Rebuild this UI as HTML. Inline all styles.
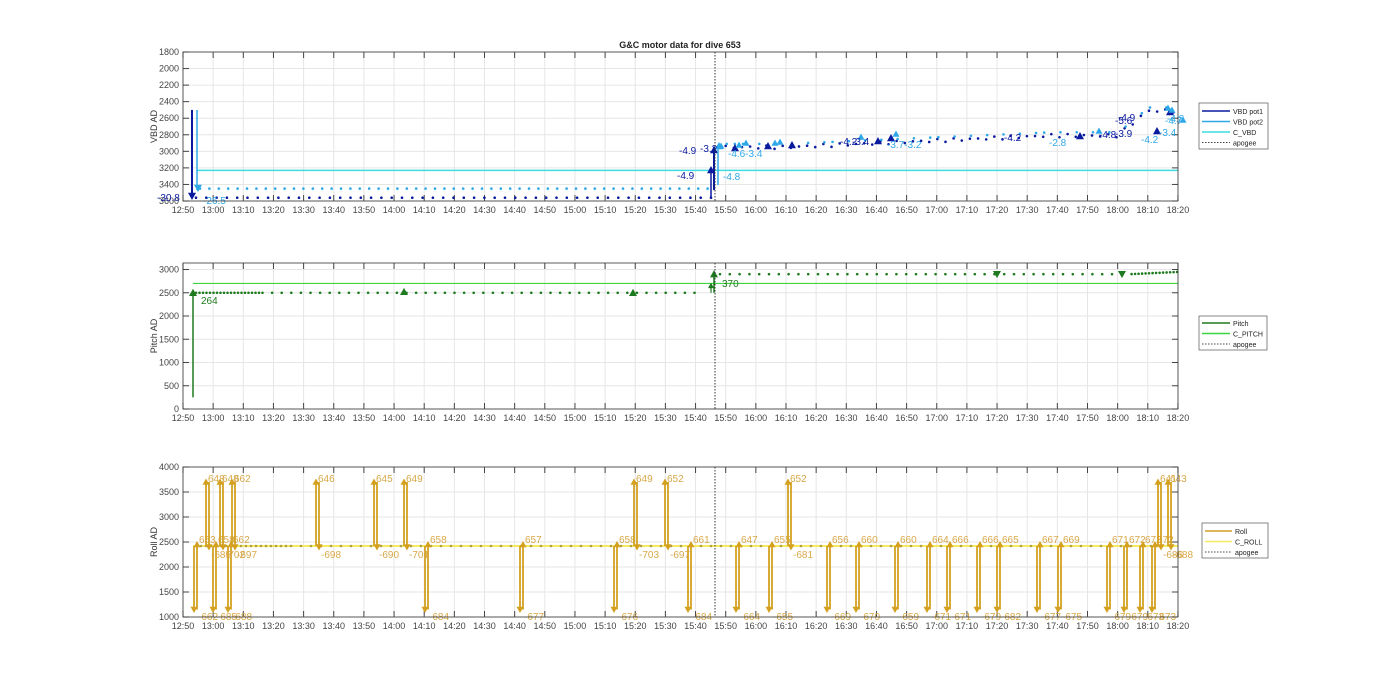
<!DOCTYPE html>
<html><head><meta charset="utf-8"><style>
html,body{margin:0;padding:0;background:#fff;}
svg{display:block;font-family:"Liberation Sans",sans-serif;}
</style></head><body>
<svg id="s" width="1400" height="693" xmlns="http://www.w3.org/2000/svg"></svg>
<script>
const S=document.getElementById('s');let h='';
const L=183,R=1178;
const X=t=>L+t*3.015;
const ticks=['12:50','13:00','13:10','13:20','13:30','13:40','13:50','14:00','14:10','14:20','14:30','14:40','14:50','15:00','15:10','15:20','15:30','15:40','15:50','16:00','16:10','16:20','16:30','16:40','16:50','17:00','17:10','17:20','17:30','17:40','17:50','18:00','18:10','18:20'];
function axes(top,bot,yt,ylab){
 h+=`<rect x="${L}" y="${top}" width="${R-L}" height="${bot-top}" fill="#fff"/>`;
 for(let i=0;i<ticks.length;i++){const x=L+i*30.15;h+=`<line x1="${x}" y1="${top}" x2="${x}" y2="${bot}" stroke="#e6e6e6" stroke-width="1"/>`;
  h+=`<line x1="${x}" y1="${top}" x2="${x}" y2="${top+6}" stroke="#444"/><line x1="${x}" y1="${bot}" x2="${x}" y2="${bot-6}" stroke="#444"/>`;
  h+=`<text x="${x}" y="${bot+12}" font-size="9" fill="#444" text-anchor="middle">${ticks[i]}</text>`;}
 yt.forEach(([y,l])=>{h+=`<line x1="${L}" y1="${y}" x2="${R}" y2="${y}" stroke="#e6e6e6"/><line x1="${L}" y1="${y}" x2="${L+6}" y2="${y}" stroke="#444"/><line x1="${R}" y1="${y}" x2="${R-6}" y2="${y}" stroke="#444"/><text x="${L-4}" y="${y+3}" font-size="9" fill="#444" text-anchor="end">${l}</text>`;});
 h+=`<text transform="translate(${L-26},${(top+bot)/2}) rotate(-90)" font-size="9" fill="#333" text-anchor="middle">${ylab}</text>`;
}
function frame(top,bot){h+=`<rect x="${L}" y="${top}" width="${R-L}" height="${bot-top}" fill="none" stroke="#333" stroke-width="0.8"/><line x1="715" y1="${top}" x2="715" y2="${bot}" stroke="#333" stroke-dasharray="1.5,1.5" stroke-width="1"/>`;}
function dot(x,y,c){h+=`<circle cx="${x}" cy="${y}" r="1.3" fill="${c}"/>`;}
function tri(x,y,c,up=true,s=4){h+=up?`<polygon points="${x-s},${y+s*0.8} ${x+s},${y+s*0.8} ${x},${y-s}" fill="${c}"/>`:`<polygon points="${x-s},${y-s*0.8} ${x+s},${y-s*0.8} ${x},${y+s}" fill="${c}"/>`;}
function txt(x,y,s,c,fs=10){h+=`<text x="${x}" y="${y}" font-size="${fs}" fill="${c}">${s}</text>`;}
// title
h+=`<text x="680" y="48" font-size="9" font-weight="bold" fill="#222" text-anchor="middle">G&amp;C motor data for dive 653</text>`;
// ===== TOP
const yv=v=>52+(v-1800)*149/1800;
let yt=[];for(let v=1800;v<=3600;v+=200)yt.push([yv(v),v]);
axes(52,201,yt,'VBD AD');
const DB='#0a1a9e',LB='#2fa8e8',CY='#3cdce0';
h+=`<line x1="197" y1="${yv(3230)}" x2="${R}" y2="${yv(3230)}" stroke="${CY}" stroke-width="1.5"/>`;
for(let x=200;x<712;x+=9.4)dot(x,yv(3450),LB);
for(let x=196;x<712;x+=10.3)dot(x,yv(3560),DB);
h+=`<line x1="192" y1="${yv(2500)}" x2="192" y2="197" stroke="${DB}" stroke-width="2"/>`;
h+=`<line x1="197" y1="${yv(2500)}" x2="197" y2="190" stroke="${LB}" stroke-width="1.5"/>`;
tri(192,196,DB,false);tri(198,188,LB,false);
txt(157,201,'-30.8',DB);txt(203,204,'-26.5',LB);
h+=`<line x1="711" y1="197" x2="711" y2="168" stroke="${DB}" stroke-width="1.5"/>`;tri(711,170,DB);
h+=`<line x1="714" y1="190" x2="714" y2="147" stroke="${DB}" stroke-width="2"/>`;tri(714,150,DB);
h+=`<line x1="718" y1="185" x2="718" y2="148" stroke="${LB}" stroke-width="1.5"/>`;tri(719,146,LB);
txt(677,179,'-4.9',DB);txt(723,180,'-4.8',LB);txt(679,154,'-4.9',DB);txt(700,152,'-3.2',DB);
// after apogee
function vr(t){if(t<200)return 2950;if(t<290)return 2950-(t-200)*1.6;if(t<310)return 2810;if(t<320)return 2810-(t-310)*30;return 2510;}
for(let t=180;t<=330;t+=2.7){const x=X(t);dot(x,yv(vr(t)+Math.sin(t)*20),DB);if(t%5<2.7)dot(x+1,yv(vr(t)-40),LB);}
[[735,148],[768,146],[792,145],[878,141],[891,138],[1080,136],[1157,131],[1170,112]].forEach(p=>tri(p[0],p[1],DB));
[[721,146],[739,145],[746,143],[775,143],[780,142],[861,137],[896,134],[1099,131],[1183,120],[1168,108],[1172,110]].forEach(p=>tri(p[0],p[1],LB,true,3.5));
txt(728,157,'-4.6-3.4',LB);txt(840,145,'-4.2',DB);txt(852,145,'-3.4',DB);txt(887,148,'-3.7-3.2',LB);
txt(1004,141,'-4.2',DB);txt(1049,146,'-2.8',LB);txt(1099,138,'-4.8',DB);txt(1115,137,'-3.9',DB);
txt(1118,121,'-4.9',DB);txt(1115,124,'-5.6',DB);txt(1141,143,'-4.2',LB);txt(1159,136,'-3.4',LB);txt(1165,124,'-4.7',LB);txt(1167,122,'-4.8',LB);
frame(52,201);
// legend top
h+=`<rect x="1199" y="103" width="69" height="46" fill="#fff" stroke="#555" stroke-width="0.7"/>`;
[['VBD pot1',DB,''],['VBD pot2',LB,''],['C_VBD',CY,''],['apogee','#444','1.5,1.5']].forEach((e,i)=>{const y=111+i*10.5;h+=`<line x1="1202" y1="${y}" x2="1230" y2="${y}" stroke="${e[1]}" stroke-width="${e[2]?1:1.5}" ${e[2]?'stroke-dasharray="'+e[2]+'"':''}/><text x="1233" y="${y+3}" font-size="7" fill="#222">${e[0]}</text>`;});
// ===== MIDDLE
const yp=v=>409-v*139.5/3000;
yt=[];for(let v=0;v<=3000;v+=500)yt.push([yp(v),v]);
axes(263,409,yt,'Pitch AD');
const G='#1e7a1e',GL='#3ed63e';
h+=`<line x1="193" y1="${yp(2700)}" x2="${R}" y2="${yp(2700)}" stroke="${GL}" stroke-width="1.2"/>`;
for(let x=196;x<700;x+=(x<260?3.5:9.6))dot(x,yp(2500),G);
for(let x=720;x<1178;x+=(x>1130?3.5:9.8))dot(x,yp(2900+(x>1130?(x-1130)*1:0)),G);
h+=`<line x1="193" y1="${yp(250)}" x2="193" y2="${yp(2500)}" stroke="${G}" stroke-width="1.5"/>`;tri(193,yp(2500),G);
tri(404,yp(2520),G);tri(633,yp(2500),G);
h+=`<line x1="711" y1="${yp(2500)}" x2="711" y2="${yp(2700)}" stroke="${G}" stroke-width="1.2"/>`;tri(711,yp(2650),G,true,3);
h+=`<line x1="714" y1="${yp(2500)}" x2="714" y2="${yp(2900)}" stroke="${G}" stroke-width="1.5"/>`;tri(714,yp(2900),G);
tri(997,yp(2900),G,false);tri(1122,yp(2900),G,false);
txt(201,304,'264',G);txt(722,287,'370',G);
frame(263,409);
h+=`<rect x="1199" y="316" width="68" height="34" fill="#fff" stroke="#555" stroke-width="0.7"/>`;
[['Pitch',G,''],['C_PITCH',GL,''],['apogee','#444','1.5,1.5']].forEach((e,i)=>{const y=323+i*10.5;h+=`<line x1="1202" y1="${y}" x2="1230" y2="${y}" stroke="${e[1]}" stroke-width="${e[2]?1:1.5}" ${e[2]?'stroke-dasharray="'+e[2]+'"':''}/><text x="1233" y="${y+3}" font-size="7" fill="#222">${e[0]}</text>`;});
// ===== BOTTOM
const yr=v=>617-(v-1000)*150/3000;
yt=[];for(let v=1000;v<=4000;v+=500)yt.push([yr(v),v]);
axes(467,617,yt,'Roll AD');
const O='#d4a020',OL='#f6ea60',OT='#d8a848';
h+=`<line x1="193" y1="${yr(2420)}" x2="${R}" y2="${yr(2420)}" stroke="${OL}" stroke-width="2"/>`;
for(let x=196;x<1175;x+=(x<290?5:10))dot(x,yr(2420),'#b0a040');
function arr(x,y1,y2){h+=`<line x1="${x}" y1="${y1}" x2="${x}" y2="${y2}" stroke="${O}" stroke-width="1.8"/>`;tri(x,y2,O,y2<y1,3.5);}
const downs=[[194,'-662','653'],[213,'-685','658'],[228,'-688','662'],[425,'-684','658'],[520,'-677','657'],[614,'-676','658'],[688,'-684','661'],[736,'-664','647'],[769,'-655','655'],[827,'-669','656'],[856,'-670','660'],[895,'-659','660'],[927,'-671','664'],[947,'-671','666'],[977,'-679','666'],[997,'-682','665'],[1037,'-677','667'],[1058,'-675','669'],[1107,'-679','671'],[1124,'-679','672'],[1140,'-673','672'],[1152,'-673','672']];
downs.forEach(d=>{const x=d[0];arr(x,yr(2420),yr(1150));arr(x+3,yr(1150),yr(2450));txt(x+4,620,d[1],OT);txt(x+5,543,d[2],OT);});
const ups=[[206,'648','-685'],[220,'648','-702'],[232,'662','-697'],[316,'646','-698'],[374,'645','-690'],[404,'649','-701'],[634,'649','-703'],[665,'652','-697'],[788,'652','-681'],[1158,'641','-686'],[1168,'643','-688']];
ups.forEach(d=>{const x=d[0];arr(x,yr(2420),yr(3700));arr(x+3,yr(3700),yr(2400));txt(x+2,482,d[1],OT);txt(x+5,558,d[2],OT);});
frame(467,617);
h+=`<rect x="1202" y="523" width="66" height="35" fill="#fff" stroke="#555" stroke-width="0.7"/>`;
[['Roll',O,''],['C_ROLL',OL,''],['apogee','#444','1.5,1.5']].forEach((e,i)=>{const y=531+i*10.5;h+=`<line x1="1205" y1="${y}" x2="1232" y2="${y}" stroke="${e[1]}" stroke-width="${e[2]?1:1.5}" ${e[2]?'stroke-dasharray="'+e[2]+'"':''}/><text x="1235" y="${y+3}" font-size="7" fill="#222">${e[0]}</text>`;});
S.innerHTML=h;
</script>
</body></html>
